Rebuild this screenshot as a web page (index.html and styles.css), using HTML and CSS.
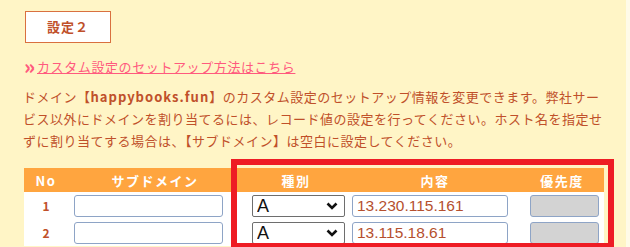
FILE: index.html
```html
<!DOCTYPE html>
<html lang="ja">
  <head>
    <meta charset="UTF-8" />
    <title>カスタム設定</title>
    <link rel="stylesheet" href="styles.css">
  </head>
  <body>
    <div class="page">
      <div class="title-box">設定２</div>

      <a class="guide-link" href="#"><span class="arrow">»</span><span class="link-text">カスタム設定のセットアップ方法はこちら</span></a>

      <p class="note">ドメイン【<b class="domain">happybooks.fun</b>】のカスタム設定のセットアップ情報を変更できます。弊社サービス以外にドメインを割り当てるには、レコード値の設定を行ってください。ホスト名を指定せずに割り当てする場合は、【サブドメイン】は空白に設定してください。</p>

      <table class="dns-table">
        <colgroup>
          <col class="col-no">
          <col class="col-sub">
          <col class="col-type">
          <col class="col-content">
          <col class="col-prio">
        </colgroup>
        <tr>
          <th>No</th>
          <th>サブドメイン</th>
          <th>種別</th>
          <th>内容</th>
          <th>優先度</th>
        </tr>
        <tr>
          <td class="num">1</td>
          <td class="sub"><input class="text-input sub-input" type="text"></td>
          <td class="type">
            <span class="select-wrap">
              <select class="type-select"><option>A</option><option>CNAME</option><option>MX</option><option>TXT</option></select>
              <svg class="chevron" viewBox="0 0 12 8" width="12" height="8"><path d="M1.5 1.5 L6 6 L10.5 1.5" /></svg>
            </span>
          </td>
          <td class="content"><input class="text-input content-input" type="text" value="13.230.115.161"></td>
          <td class="prio"><input class="text-input prio-input" type="text" disabled></td>
        </tr>
        <tr>
          <td class="num">2</td>
          <td class="sub"><input class="text-input sub-input" type="text"></td>
          <td class="type">
            <span class="select-wrap">
              <select class="type-select"><option>A</option><option>CNAME</option><option>MX</option><option>TXT</option></select>
              <svg class="chevron" viewBox="0 0 12 8" width="12" height="8"><path d="M1.5 1.5 L6 6 L10.5 1.5" /></svg>
            </span>
          </td>
          <td class="content"><input class="text-input content-input" type="text" value="13.115.18.61"></td>
          <td class="prio"><input class="text-input prio-input" type="text" disabled></td>
        </tr>
      </table>

      <!-- annotation box over the record columns -->
      <div class="highlight"></div>
    </div>
  </body>
</html>
```

FILE: styles.css
```css
* {
  box-sizing: border-box;
  margin: 0;
  padding: 0;
}

html,
body {
  overflow: hidden;
}

body {
  background: #fffbe8;
  font-family: "Noto Sans CJK JP", sans-serif;
  color: #c0502a;
}

.page {
  position: relative;
  width: 626px;
  height: 247px;
  overflow: hidden;
  padding: 11px 0 0 24px;
  background: #fff5c6;
}

.title-box {
  width: 86px;
  height: 32px;
  margin-left: 1px;
  border: 1px solid #d9703f;
  background: #fff;
  font-size: 13px;
  font-weight: bold;
  line-height: 30px;
  text-align: center;
  letter-spacing: 1px;
  color: #c0502a;
}

/* Link */
.guide-link {
  display: block;
  margin-top: 14px;
  height: 20px;
  line-height: 20px;
  font-size: 13px;
  letter-spacing: 0.6px;
  color: #ff5a7e;
  text-decoration: none;
}

.arrow {
  display: inline-block;
  width: 13px;
  font-size: 20px;
  font-weight: 900;
  letter-spacing: 0;
  line-height: 18px;
  vertical-align: top;
}

.link-text {
  text-decoration: underline;
}

/* Description */
.note {
  width: 586px;
  margin: 9px 0 0 -1px;
  font-size: 13px;
  line-height: 22px;
  letter-spacing: 0.5px;
}

.domain {
  letter-spacing: 1px;
}

/* Record table */
.dns-table {
  margin-top: 16px;
  width: 580px;
  table-layout: fixed;
  border-collapse: collapse;
  background: #fff;
}

.col-no { width: 44px; }
.col-sub { width: 174px; }
.col-type { width: 108px; }
.col-content { width: 170px; }
.col-prio { width: 84px; }

.dns-table th {
  height: 24px;
  padding: 0;
  background: #ffa53f;
  color: #fff;
  font-size: 13px;
  font-weight: bold;
  letter-spacing: 1.5px;
}

.dns-table td {
  height: 27px;
  padding: 0;
}

.num {
  text-align: center;
  font-size: 12px;
  font-weight: bold;
}

.sub { padding-left: 6px !important; }
.type { padding-left: 10px !important; }
.content { padding-left: 2px !important; }
.prio { padding-left: 10px !important; }

.text-input {
  display: block;
  height: 22px;
  border: 1px solid #8ea4c6;
  border-radius: 3px;
  background: #fff;
  padding: 0 4px;
  font-family: "Liberation Sans", Arial, sans-serif;
  font-size: 15.5px;
  color: #b5502e;
  outline: none;
}

.sub-input { width: 149px; }
.content-input { width: 156px; }

.prio-input {
  width: 69px;
  background: #d3d3d3;
}

.select-wrap {
  position: relative;
  display: block;
  width: 93px;
  height: 22px;
}

.type-select {
  appearance: none;
  -webkit-appearance: none;
  display: block;
  width: 93px;
  height: 22px;
  padding: 0 0 0 4px;
  border: 1px solid #6e6e6e;
  border-radius: 2px;
  background: #fff;
  font-family: "Liberation Sans", Arial, sans-serif;
  font-size: 18px;
  color: #111;
  outline: none;
}

.chevron {
  position: absolute;
  right: 7px;
  top: 7px;
  fill: none;
  stroke: #111;
  stroke-width: 2.6;
  pointer-events: none;
}

/* Red annotation frame */
.highlight {
  position: absolute;
  left: 231px;
  top: 159px;
  width: 383px;
  height: 90px;
  border: 6px solid #ee1c24;
  pointer-events: none;
}
```
